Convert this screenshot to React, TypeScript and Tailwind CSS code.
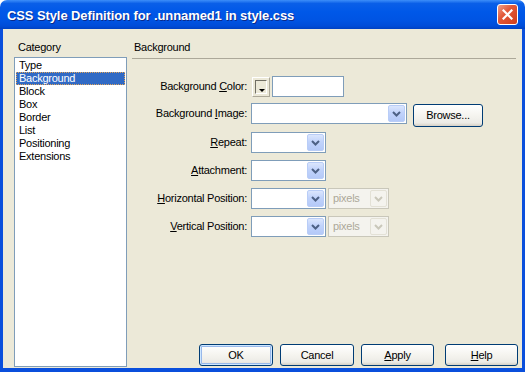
import React from "react";

const categories = ["Type", "Background", "Block", "Box", "Border", "List", "Positioning", "Extensions"];

const Chevron = ({ color = "#4d6185" }: { color?: string }) => (
  <svg width="9" height="6" viewBox="0 0 9 6">
    <path d="M1 1 L4.5 4.5 L8 1" fill="none" stroke={color} strokeWidth="2" />
  </svg>
);

// XP style drop-down box
const Combo = ({ width, disabled, text }: { width: string; disabled?: boolean; text?: string }) => (
  <div
    className={`${width} h-[21px] flex items-stretch p-px border ${
      disabled ? "border-[#c9c7ba] bg-[#f4f3ee]" : "border-[#7f9db9] bg-white"
    }`}
  >
    <div className={`flex-1 pl-[3px] leading-[17px] ${disabled ? "text-[#aca899]" : "text-black"}`}>{text}</div>
    {disabled ? (
      <div className="w-[17px] flex items-center justify-center rounded-[2px] bg-[#f4f3ee] border border-[#e3e1d6]">
        <Chevron color="#c9c7ba" />
      </div>
    ) : (
      <div className="w-[17px] flex items-center justify-center rounded-[2px] border border-[#b9cdf7] bg-[linear-gradient(to_bottom,#dbe6fd_0%,#c1d3fb_45%,#b4c9f8_100%)]">
        <Chevron />
      </div>
    )}
  </div>
);

const XpButton = ({ label, width, isDefault }: { label: React.ReactNode; width: string; isDefault?: boolean }) => (
  <div
    className={`${width} h-[22px] flex items-center justify-center rounded-[3px] border border-[#003c74] bg-[linear-gradient(to_bottom,#ffffff_0%,#f5f4ef_50%,#ecebe6_85%,#d6d0c5_100%)] ${
      isDefault ? "[box-shadow:inset_0_0_0_1px_#cee7ff,inset_0_0_0_2px_#98b8ea]" : ""
    }`}
  >
    {label}
  </div>
);

const Row = ({ label, children, className }: { label: React.ReactNode; children: React.ReactNode; className: string }) => (
  <div className={`flex items-start h-[21px] ${className}`}>
    <div className="w-[115px] text-right leading-[21px] shrink-0">{label}</div>
    <div className="ml-[4px] flex items-start">{children}</div>
  </div>
);

export default function App() {
  return (
    <div className="w-[525px] h-[372px] flex flex-col bg-white text-[11px] tracking-[-0.25px] text-black font-['Liberation_Sans',Arial,sans-serif] select-none">
      {/* Title bar */}
      <div className="h-[29px] shrink-0 rounded-t-[7px] flex items-center justify-between pl-[7px] pr-[7px] bg-[linear-gradient(to_bottom,#3d8ef9_0%,#0a5fe8_12%,#0058e8_40%,#0054e3_70%,#004cd8_90%,#0041c2_100%)]">
        <div className="pt-[2px] text-white font-bold text-[13px] tracking-[-0.1px] [text-shadow:1px_1px_0_#0b2a8a]">
          CSS Style Definition for .unnamed1 in style.css
        </div>
        <div className="w-[21px] h-[21px] rounded-[3px] border border-white flex items-center justify-center bg-[linear-gradient(135deg,#f0a08a_0%,#e2593a_40%,#cf3d1c_100%)]">
          <svg width="11" height="11" viewBox="0 0 11 11">
            <path d="M1.5 1.5 L9.5 9.5 M9.5 1.5 L1.5 9.5" stroke="white" strokeWidth="2.2" strokeLinecap="square" />
          </svg>
        </div>
      </div>

      {/* Body */}
      <div className="flex-1 flex bg-[#ece9d8] border-l-[3px] border-r-[3px] border-b-[4px] border-[#0a4fdc]">
        {/* Category column */}
        <div className="ml-[11px] w-[113px] pt-[12px] flex flex-col">
          <div className="h-[16px] leading-[13px] pl-[4px]">Category</div>
          <div className="h-[310px] border border-[#7f9db9] bg-white p-px">
            {categories.map((c) => (
              <div
                key={c}
                className={`h-[13px] leading-[11px] pl-[2px] border ${
                  c === "Background"
                    ? "bg-[#316ac5] text-white border-dotted border-[#e0a45a]"
                    : "border-transparent"
                }`}
              >
                {c}
              </div>
            ))}
          </div>
        </div>

        {/* Panel */}
        <div className="ml-[5px] w-[386px] pt-[12px] flex flex-col">
          <div className="h-[17px] leading-[13px] pl-[2px]">Background</div>
          <div className="h-px w-[384px] bg-[#aca899]" />

          <Row
            className="mt-[17px]"
            label={
              <>
                Background <u>C</u>olor:
              </>
            }
          >
            <div className="ml-px mt-px w-[18px] h-[20px] border border-t-[#ffffff] border-l-[#ffffff] border-b-[#aca899] border-r-[#aca899] bg-[#ece9d8] p-[2px]">
              <div className="relative w-full h-full border border-t-[#716f64] border-l-[#716f64] border-b-white border-r-white">
                <div className="absolute right-[1px] bottom-[1px] w-0 h-0 border-l-[3px] border-r-[3px] border-t-[3px] border-l-transparent border-r-transparent border-t-black" />
              </div>
            </div>
            <div className="ml-[2px] w-[72px] h-[21px] border border-[#7f9db9] bg-white" />
          </Row>

          <Row
            className="mt-[6px]"
            label={
              <>
                Background <u>I</u>mage:
              </>
            }
          >
            <Combo width="w-[156px]" />
            <div className="ml-[6px] mt-px">
              <div className="w-[70px] h-[23px] flex items-center justify-center rounded-[3px] border border-[#003c74] bg-[linear-gradient(to_bottom,#ffffff_0%,#f5f4ef_50%,#ecebe6_85%,#d6d0c5_100%)]">
                Browse...
              </div>
            </div>
          </Row>

          <Row
            className="mt-[8px]"
            label={
              <>
                <u>R</u>epeat:
              </>
            }
          >
            <Combo width="w-[75px]" />
          </Row>

          <Row
            className="mt-[7px]"
            label={
              <>
                <u>A</u>ttachment:
              </>
            }
          >
            <Combo width="w-[75px]" />
          </Row>

          <Row
            className="mt-[7px]"
            label={
              <>
                <u>H</u>orizontal Position:
              </>
            }
          >
            <Combo width="w-[75px]" />
            <div className="ml-[2px]">
              <Combo width="w-[61px]" disabled text="pixels" />
            </div>
          </Row>

          <Row
            className="mt-[7px]"
            label={
              <>
                <u>V</u>ertical Position:
              </>
            }
          >
            <Combo width="w-[75px]" />
            <div className="ml-[2px]">
              <Combo width="w-[61px]" disabled text="pixels" />
            </div>
          </Row>

          {/* Dialog buttons */}
          <div className="mt-auto mb-[2px] flex pl-[67px]">
            <XpButton width="w-[74px]" label="OK" isDefault />
            <div className="ml-[7px]">
              <XpButton width="w-[74px]" label="Cancel" />
            </div>
            <div className="ml-[7px]">
              <XpButton
                width="w-[73px]"
                label={
                  <>
                    <u>A</u>pply
                  </>
                }
              />
            </div>
            <div className="ml-[11px]">
              <XpButton
                width="w-[73px]"
                label={
                  <>
                    <u>H</u>elp
                  </>
                }
              />
            </div>
          </div>
        </div>
      </div>
    </div>
  );
}
